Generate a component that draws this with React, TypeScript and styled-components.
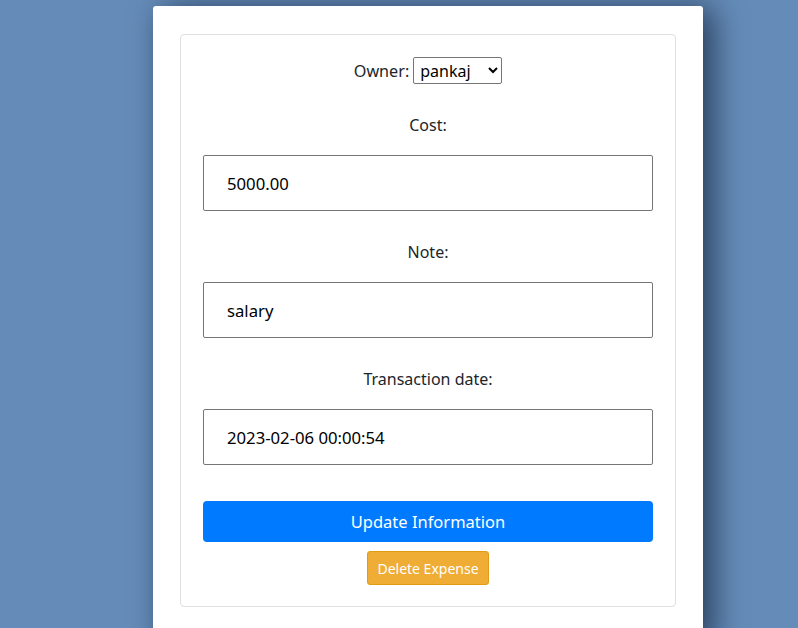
import React from "react";
import styled, { createGlobalStyle } from "styled-components";

const Global = createGlobalStyle`
  html, body { margin: 0; padding: 0; }
  body {
    background: #658cb8;
    font-family: "Noto Sans", "Open Sans", sans-serif;
    color: #212529;
    overflow: hidden;
  }
`;

const Page = styled.div`
  padding: 6px 0 0 153px;
  height: 628px;
  box-sizing: border-box;
`;

const Sheet = styled.div`
  width: 550px;
  background: #fff;
  border-radius: 3px;
  padding: 28px 27px 40px 27px;
  box-sizing: border-box;
  box-shadow: 10px 2px 32px rgba(20, 35, 60, 0.75);
`;

const Card = styled.form`
  border: 1px solid #dfdfdf;
  border-radius: 4px;
  padding: 22px 22px 21px;
  display: flex;
  flex-direction: column;
  align-items: center;
`;

const OwnerRow = styled.div`
  display: flex;
  align-items: center;
  gap: 4px;
  height: 27px;
  font-size: 16.2px;
`;

const Select = styled.select`
  font-family: inherit;
  font-size: 16px;
  height: 27px;
  width: 89px;
  border: 1px solid #767676;
  border-radius: 2px;
  background: #fff;
  color: #000;
  padding: 0 2px;
`;

const Label = styled.label`
  display: block;
  font-size: 16px;
  line-height: 25px;
  margin: 29px 0 17px;
  text-align: center;
`;

const Input = styled.input`
  width: 100%;
  height: 56px;
  box-sizing: border-box;
  border: 1px solid #767676;
  border-radius: 2px;
  padding: 0 23px;
  font-family: inherit;
  font-size: 16.7px;
  color: #000;
  outline: none;
`;

const PrimaryButton = styled.button`
  margin-top: 36px;
  width: 100%;
  height: 41px;
  border: none;
  border-radius: 4px;
  background: #007bff;
  color: #fff;
  font-family: inherit;
  font-size: 16.5px;
`;

const WarnButton = styled.button`
  margin-top: 9px;
  height: 34px;
  padding: 0 9px;
  border: 1px solid #e39c0f;
  border-radius: 3px;
  background: #f0ad35;
  color: #fff;
  font-family: inherit;
  font-size: 14px;
`;

export default function App() {
  return (
    <>
      <Global />
      <Page>
        <Sheet>
          <Card onSubmit={(e) => e.preventDefault()}>
            <OwnerRow>
              <span>Owner:</span>
              <Select defaultValue="pankaj">
                <option value="pankaj">pankaj</option>
              </Select>
            </OwnerRow>
            <Label>Cost:</Label>
            <Input defaultValue="5000.00" />
            <Label>Note:</Label>
            <Input defaultValue="salary" />
            <Label>Transaction date:</Label>
            <Input defaultValue="2023-02-06 00:00:54" />
            <PrimaryButton type="submit">Update Information</PrimaryButton>
            <WarnButton type="button">Delete Expense</WarnButton>
          </Card>
        </Sheet>
      </Page>
    </>
  );
}
